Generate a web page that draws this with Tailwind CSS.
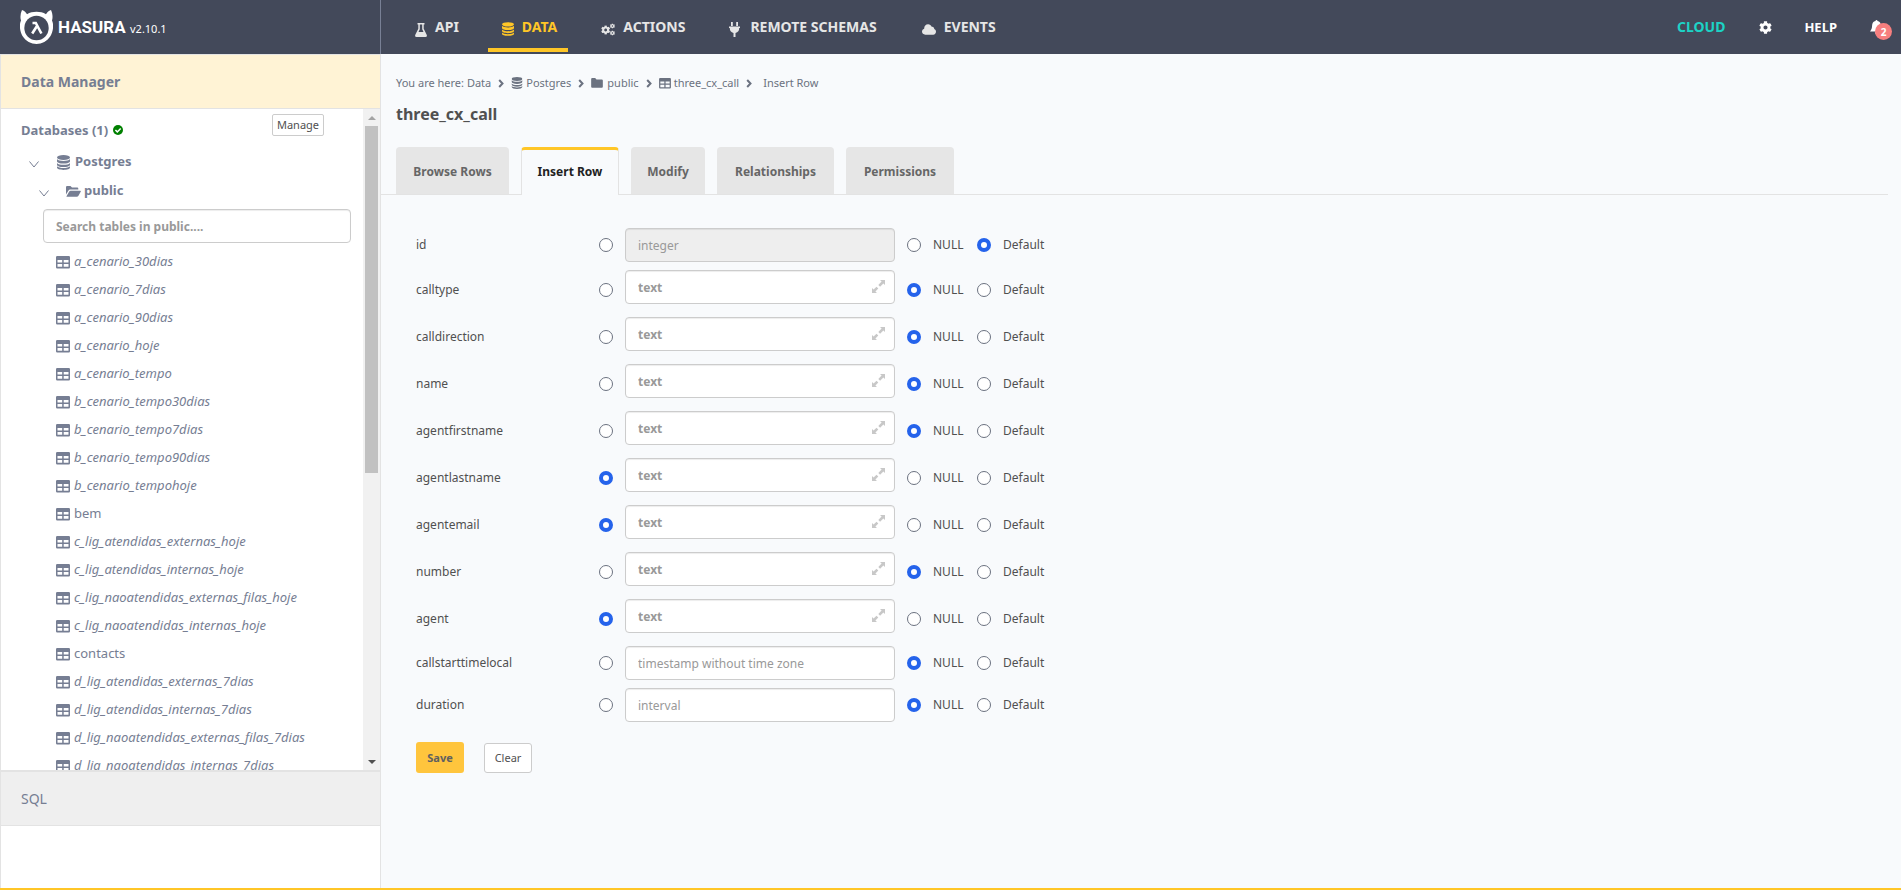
<!DOCTYPE html>
<html lang="en">
<head>
<meta charset="utf-8">
<title>Insert Row - three_cx_call - Data | Hasura</title>
<script src="https://cdn.jsdelivr.net/npm/@tailwindcss/browser@4"></script>
</head>
<body class="flex h-screen flex-col overflow-hidden border-b-2 border-[#ffc627] bg-[#f8fafc] font-['Noto_Sans',sans-serif] text-[13px] leading-5 text-[#505050]">
<svg class="hidden" aria-hidden="true">
  <symbol id="db" viewBox="0 0 14 16"><ellipse cx="7" cy="2.6" rx="7" ry="2.6"/><path d="M0 4.3c1 1.5 4 2 7 2s6-.5 7-2v2.4c0 1.4-3.100 2.500-7 2.500S0 8.100 0 6.700zM0 8.500c1 1.500 4 2 7 2s6-.5 7-2v1.900c0 1.400-3.100 2.500-7 2.500s-7-1.100-7-2.500zM0 12.100c1 1.400 4 1.900 7 1.900s6-.5 7-1.900v1.300C14 14.900 10.900 16 7 16s-7-1.100-7-2.600z"/></symbol>
  <symbol id="table" viewBox="0 0 14 13"><path fill-rule="evenodd" d="M1.200 0h11.600Q14 0 14 1.200v10.100q0 1.200-1.200 1.200H1.200Q0 12.500 0 11.300V1.200Q0 0 1.200 0zM1.500 4v2.500h4.700V4zM7.700 4v2.500h4.800V4zM1.500 8v2.800h4.700V8zM7.700 8v2.800h4.800V8z"/></symbol>
  <symbol id="folder" viewBox="0 0 14 12"><path d="M0 1.200Q0 0 1.200 0h3.600l1.600 1.800h6.400Q14 1.800 14 3v7.600q0 1.200-1.200 1.200H1.200Q0 11.800 0 10.600z"/></symbol>
  <symbol id="folder-open" viewBox="0 0 15 11"><path d="M0 8.500V1.100Q0 0 1.100 0h3.400L6 1.500h5.200q1.100 0 1.100 1.100v1H4.200Q3.100 3.600 2.500 4.600zM.4 10.500l2.700-4.800q.5-.9 1.500-.9h9.700q.9 0 .4.900l-2.400 4.200q-.5.800-1.500.8H.7z"/></symbol>
  <symbol id="chev" viewBox="0 0 6 9"><path d="M1.200 1l3.300 3.500L1.200 8" fill="none" stroke="currentColor" stroke-width="2"/></symbol>
  <symbol id="down" viewBox="0 0 10 7"><path d="M.5.500L5 6 9.500.500" fill="none" stroke="currentColor" stroke-width="1"/></symbol>
  <symbol id="gear" viewBox="0 0 512 512"><path d="M487.400 315.700l-42.600-24.600c4.300-23.200 4.300-47 0-70.200l42.600-24.600c4.900-2.800 7.100-8.600 5.500-14-11.100-35.600-30-67.800-54.700-94.600-3.800-4.100-10-5.100-14.800-2.300L380.800 110c-17.900-15.400-38.500-27.300-60.800-35.100V25.800c0-5.600-3.900-10.500-9.400-11.700-36.700-8.200-74.300-7.800-109.200 0-5.500 1.200-9.400 6.100-9.400 11.700V75c-22.200 7.900-42.800 19.800-60.800 35.100L88.700 85.500c-4.900-2.800-11-1.900-14.800 2.300-24.700 26.700-43.600 58.900-54.700 94.600-1.700 5.400.6 11.200 5.500 14L67.300 221c-4.300 23.200-4.300 47 0 70.200l-42.600 24.600c-4.900 2.800-7.100 8.600-5.500 14 11.100 35.600 30 67.800 54.700 94.600 3.800 4.100 10 5.100 14.800 2.300l42.600-24.600c17.900 15.400 38.500 27.300 60.800 35.100v49.200c0 5.600 3.900 10.500 9.400 11.700 36.700 8.200 74.300 7.800 109.200 0 5.500-1.200 9.400-6.100 9.400-11.700v-49.200c22.200-7.900 42.800-19.800 60.800-35.100l42.600 24.600c4.900 2.800 11 1.900 14.800-2.300 24.700-26.700 43.600-58.900 54.700-94.600 1.500-5.500-.7-11.300-5.600-14.100zM256 336c-44.100 0-80-35.900-80-80s35.900-80 80-80 80 35.900 80 80-35.900 80-80 80z"/></symbol>
</svg>

<header class="flex h-[54px] shrink-0 items-stretch bg-[#43495a] text-[14px] font-bold text-[#e6e6e6]">
  <div class="flex w-[381px] shrink-0 items-center border-r border-[#788095] pl-5">
    <a href="#" class="flex items-center text-white" aria-label="Hasura">
      <svg class="h-[34px] w-[33px]" viewBox="0 0 33 34"><path fill="#fff" d="M2 0C4.500 1 6 2.500 7 4.200 12.500 1 20.500 1 26 4.200 27 2.500 28.500 1 31 0c1.600 3.600 2 7 1 10.500 2 4 1.200 11-1.500 15.500-6.500 10.600-21.500 10.600-28 0C-.2 21.500-1 14.500 1 10.500 0 7 .4 3.600 2 0z"/><circle cx="16.500" cy="18" r="12.200" fill="#43495a"/><path d="M12.500 13h3.300l5.600 10.500M16.700 16.500l-4.500 7" fill="none" stroke="#fff" stroke-width="2.600"/></svg>
      <span class="ml-[5px] w-[61px] font-['Roboto',sans-serif] text-[17px]">HASURA</span>
    </a>
    <a href="#" class="mt-1 ml-[11px] text-[11px] font-normal text-white">v2.10.1</a>
  </div>
  <nav class="flex h-[54px] gap-5 pl-[20px]">
    <a href="#" class="flex items-center gap-2 pr-[9px] pl-[14px]"><svg class="mt-[5px] h-[14px] w-3 fill-current" viewBox="0 0 12 14"><path fill-rule="evenodd" d="M2.500 0h7v1.500h-.8v4.200l3.100 6.200Q12.300 14 10.500 14h-9Q-.3 14 .2 11.900l3.100-6.200V1.500h-.8zM4.800 1.500v4.700L3.500 9h5L7.200 6.200V1.500z"/></svg>API</a>
    <a href="#" aria-current="page" class="mb-[2px] flex items-center gap-2 border-b-4 border-[#ffc627] pr-[11px] pl-[14px] text-[#ffc627]"><svg class="mt-[9px] h-[14px] w-[12px] fill-current"><use href="#db"/></svg><span class="mt-[6px]">DATA</span></a>
    <a href="#" class="flex items-center gap-2 pr-[11px] pl-[13px]"><svg class="mt-1 h-[13px] w-[14px] fill-current" viewBox="0 0 15 13"><use href="#gear" y="2" width="10" height="10"/><use href="#gear" x="9.500" y="0" width="5.500" height="5.500"/><use href="#gear" x="9.500" y="7.500" width="5.500" height="5.500"/></svg>ACTIONS</a>
    <a href="#" class="flex items-center gap-[10px] pr-3 pl-[13px]"><svg class="mt-1 h-[15px] w-[11px] fill-current" viewBox="0 0 11 15"><path d="M2 0h1.800v4H2zM7.200 0H9v4H7.200zM0 4.500h11V6h-.8c0 3-1.200 4.300-3.700 5v4h-2v-4C2 10.300.8 9 .8 6H0z"/></svg>REMOTE SCHEMAS</a>
    <a href="#" class="flex items-center gap-2 pr-3 pl-[13px]"><svg class="mt-1 h-[11px] w-[14px] fill-current" viewBox="0 0 15 11"><path d="M3.500 11C1.500 11 0 9.500 0 7.700 0 6.200 1 5 2.300 4.600 2.300 1.900 4.100 0 6.500 0c1.800 0 3.200 1 3.900 2.500 1.500-.3 2.900.8 2.700 2.500C14.300 5.500 15 6.600 15 7.900 15 9.600 13.700 11 12 11z"/></svg>EVENTS</a>
  </nav>
  <div class="ml-auto flex items-center pr-[9px] text-white">
    <a href="#" class="text-[#1cd3c6]">CLOUD</a>
    <a href="#" aria-label="Settings" class="ml-[34px]"><svg class="h-[13px] w-[13px] fill-current"><use href="#gear"/></svg></a>
    <a href="#" class="ml-8 text-[13px]">HELP</a>
    <button aria-label="Notifications" class="relative ml-[33px] h-6 w-[22px] text-white"><svg class="h-[14px] w-[13px] fill-current" viewBox="0 0 13 14"><path d="M5.500 1a1 1 0 0 1 2 0c2.300.5 3.300 2.300 3.400 4.500.1 3 .8 4.500 2.100 6H0c1.300-1.500 2-3 2.100-6C2.200 3.300 3.200 1.500 5.500 1zM4.800 12.300h3.400a1.700 1.700 0 0 1-3.400 0z"/></svg><span class="absolute top-[8px] left-[5px] flex size-[17px] items-center justify-center rounded-full bg-[#f77f7f] text-[10px] font-bold">2</span></button>
  </div>
</header>

<div class="flex min-h-0 flex-1">
  <aside class="flex w-[381px] shrink-0 flex-col border-x border-[#e3e3e3] bg-white text-[#767e93]">
    <a href="#" class="flex h-[55px] shrink-0 items-center border-y border-[#e3e3e3] bg-[#fff3d5] pl-5 text-[14px] font-bold">Data Manager</a>
    <div class="flex min-h-0 flex-1">
      <div class="min-w-0 flex-1 overflow-hidden pr-3">
        <div class="flex h-[38px] items-start pl-5">
          <span class="mt-[11px] font-bold">Databases (1)</span>
          <svg class="mt-[16px] ml-[5px] size-[10px]" viewBox="0 0 10 10"><circle cx="5" cy="5" r="5" fill="green"/><path d="M2.400 5l1.900 1.900 3.400-3.500" fill="none" stroke="#fff" stroke-width="1.500"/></svg>
          <button class="mt-[5px] mr-[27px] ml-auto h-[22px] w-[52px] rounded-[2px] border border-[#ccc] bg-white text-[11px] leading-5 text-[#505050]">Manage</button>
        </div>
        <div class="flex h-7 items-center pl-7 font-bold"><svg class="mt-[6px] h-[7px] w-[10px]"><use href="#down"/></svg><svg class="mt-[2px] ml-[18px] h-[15px] w-[13px] fill-current"><use href="#db"/></svg><a href="#" class="ml-[5px]">Postgres</a></div>
        <div class="flex h-[30px] items-center pl-[38px] font-bold"><svg class="mt-[6px] h-[7px] w-[10px]"><use href="#down"/></svg><svg class="mt-[2px] ml-[17px] h-[11px] w-[15px] fill-current"><use href="#folder-open"/></svg><a href="#" class="ml-[3px]">public</a></div>
        <div class="mt-1 pl-[42px]"><input type="text" aria-label="Search tables" placeholder="Search tables in public...." class="block h-[34px] w-full rounded border border-[#ccc] bg-white px-3 text-[12px] font-bold shadow-[inset_0_1px_1px_rgba(0,0,0,0.075)] placeholder:text-[#999]"></div>
        <ul id="tables" class="mt-1"></ul>
      </div>
      <div class="flex w-[17px] shrink-0 flex-col items-center justify-between bg-[#f1f1f1]" aria-hidden="true">
        <div class="flex h-[17px] items-center"><div class="border-x-4 border-b-4 border-x-transparent border-b-[#a3a3a3]"></div></div>
        <div class="w-[13px] grow-[347] basis-0 bg-[#c1c1c1]"></div>
        <div class="grow-[280] basis-0"></div>
        <div class="flex h-[17px] items-center"><div class="border-x-4 border-t-4 border-x-transparent border-t-[#505050]"></div></div>
      </div>
    </div>
    <a href="#" class="mb-[62px] flex h-[56px] shrink-0 items-center border-t-2 border-b border-[#e3e3e3] bg-[#efefef] pl-5 text-[14px]">SQL</a>
  </aside>

  <main class="min-w-0 flex-1 pr-[13px]">
    <nav aria-label="Breadcrumb" class="mt-[19px] flex h-5 items-center pl-[15px] text-[11px] text-[#6b7280]">
      <span>You are here: <a href="#">Data</a></span>
      <svg class="mx-[7px] h-[9px] w-[6px]"><use href="#chev"/></svg>
      <svg class="mr-[3px] h-[12px] w-[12px] fill-current"><use href="#db"/></svg><a href="#">Postgres</a>
      <svg class="mx-[7px] h-[9px] w-[6px]"><use href="#chev"/></svg>
      <svg class="mr-1 h-[10px] w-[12px] fill-current"><use href="#folder"/></svg><a href="#">public</a>
      <svg class="mx-[7px] h-[9px] w-[6px]"><use href="#chev"/></svg>
      <svg class="mr-[3px] h-[11px] w-[12px] fill-current"><use href="#table"/></svg><a href="#">three_cx_call</a>
      <svg class="mr-[11px] ml-[7px] h-[9px] w-[6px]"><use href="#chev"/></svg><span>Insert Row</span>
    </nav>
    <h1 class="mt-[11px] pl-[15px] text-[16px] font-bold leading-5">three_cx_call</h1>
    <nav class="mt-[23px] flex h-12 gap-3 border-b border-[#e3e3e3] pl-[15px] text-[12px] font-bold text-[#666]">
      <a href="#" class="flex min-w-[113px] items-center justify-center rounded-t bg-[#e6e6e6] pt-[2px]">Browse Rows</a>
      <a href="#" aria-current="page" class="-mb-px flex min-w-[98px] items-center justify-center rounded-t border-x border-t-3 border-x-[#e3e3e3] border-t-[#ffc627] bg-[#f8fafc] pb-[2px] text-[#222]">Insert Row</a>
      <a href="#" class="flex min-w-[74px] items-center justify-center rounded-t bg-[#e6e6e6] pt-[2px]">Modify</a>
      <a href="#" class="flex min-w-[117px] items-center justify-center rounded-t bg-[#e6e6e6] pt-[2px]">Relationships</a>
      <a href="#" class="flex min-w-[108px] items-center justify-center rounded-t bg-[#e6e6e6] pt-[2px]">Permissions</a>
    </nav>
    <form class="mt-[33px] pl-[35px] text-[12px]">
      <div id="fields"></div>
      <div class="mt-5 flex items-end gap-5">
        <button type="button" class="h-[31px] w-12 rounded-[3px] bg-[#ffc53d] text-[11px] font-bold text-[#606060]">Save</button>
        <button type="button" class="h-[30px] w-12 rounded-[3px] border border-[#ccc] bg-white text-[11px]">Clear</button>
      </div>
    </form>
  </main>
</div>

<script>
const tables = ['a_cenario_30dias','a_cenario_7dias','a_cenario_90dias','a_cenario_hoje','a_cenario_tempo','b_cenario_tempo30dias','b_cenario_tempo7dias','b_cenario_tempo90dias','b_cenario_tempohoje','bem','c_lig_atendidas_externas_hoje','c_lig_atendidas_internas_hoje','c_lig_naoatendidas_externas_filas_hoje','c_lig_naoatendidas_internas_hoje','contacts','d_lig_atendidas_externas_7dias','d_lig_atendidas_internas_7dias','d_lig_naoatendidas_externas_filas_7dias','d_lig_naoatendidas_internas_7dias'];
// Views are listed in italics, plain tables upright.
document.getElementById('tables').innerHTML = tables.map(t => `<li class="flex h-7 items-center pl-[55px]"><svg class="mt-[2px] mr-1 h-[13px] w-[14px] shrink-0 fill-current"><use href="#table"/></svg><a href="#" class="${t.includes('_') ? 'italic' : 'not-italic'}">${t}</a></li>`).join('');

// name, column type, selected option
const fields = [['id','integer','default'],['calltype','text','null'],['calldirection','text','null'],['name','text','null'],['agentfirstname','text','null'],['agentlastname','text','value'],['agentemail','text','value'],['number','text','null'],['agent','text','value'],['callstarttimelocal','timestamp without time zone','null'],['duration','interval','null']];
const radio = (f, v, extra) => `<input type="radio" id="${f[0]}-${v}" name="${f[0]}" aria-label="${f[0]} ${v}" ${f[2] === v ? 'checked' : ''} class="size-[14px] shrink-0 appearance-none rounded-full border border-[#6b7280] bg-white checked:border-4 checked:border-[#2563eb] ${extra}">`;
document.getElementById('fields').innerHTML = fields.map(f => {
  const text = f[1] === 'text';
  return `<div class="${text ? 'mb-[7px] flex h-10 items-center' : 'mb-2 flex h-[34px] items-center'}">
    <label for="${f[0]}" class="w-[183px] shrink-0">${f[0]}</label>
    ${radio(f, 'value', 'mr-3')}
    <div class="relative w-[270px] self-start">
      <input type="text" id="${f[0]}" placeholder="${f[1]}" ${f[0] === 'id' ? 'disabled' : ''} class="block h-[34px] w-full rounded border border-[#ccc] bg-white px-3 shadow-[inset_0_1px_1px_rgba(0,0,0,0.075)] placeholder:text-[#999] disabled:bg-[#eee] ${text ? 'font-bold' : 'font-normal'}">
      ${text ? '<button type="button" aria-label="Expand" class="absolute top-[10px] right-[10px]"><svg class="size-[13px] text-[#c8c8c8]" viewBox="0 0 13 13"><path fill="currentColor" d="M8 0h5v5l-1.600-1.600-3.300 3.300-1.800-1.800 3.300-3.300zM0 8l1.600 1.600 2.900-2.900 1.800 1.800-2.900 2.900L5 13H0z"/></svg></button>' : ''}
    </div>
    ${radio(f, 'null', 'ml-3')}<label for="${f[0]}-null" class="ml-3 w-8">NULL</label>
    ${radio(f, 'default', 'ml-3')}<label for="${f[0]}-default" class="ml-3">Default</label>
  </div>`;
}).join('');
</script>
</body>
</html>
